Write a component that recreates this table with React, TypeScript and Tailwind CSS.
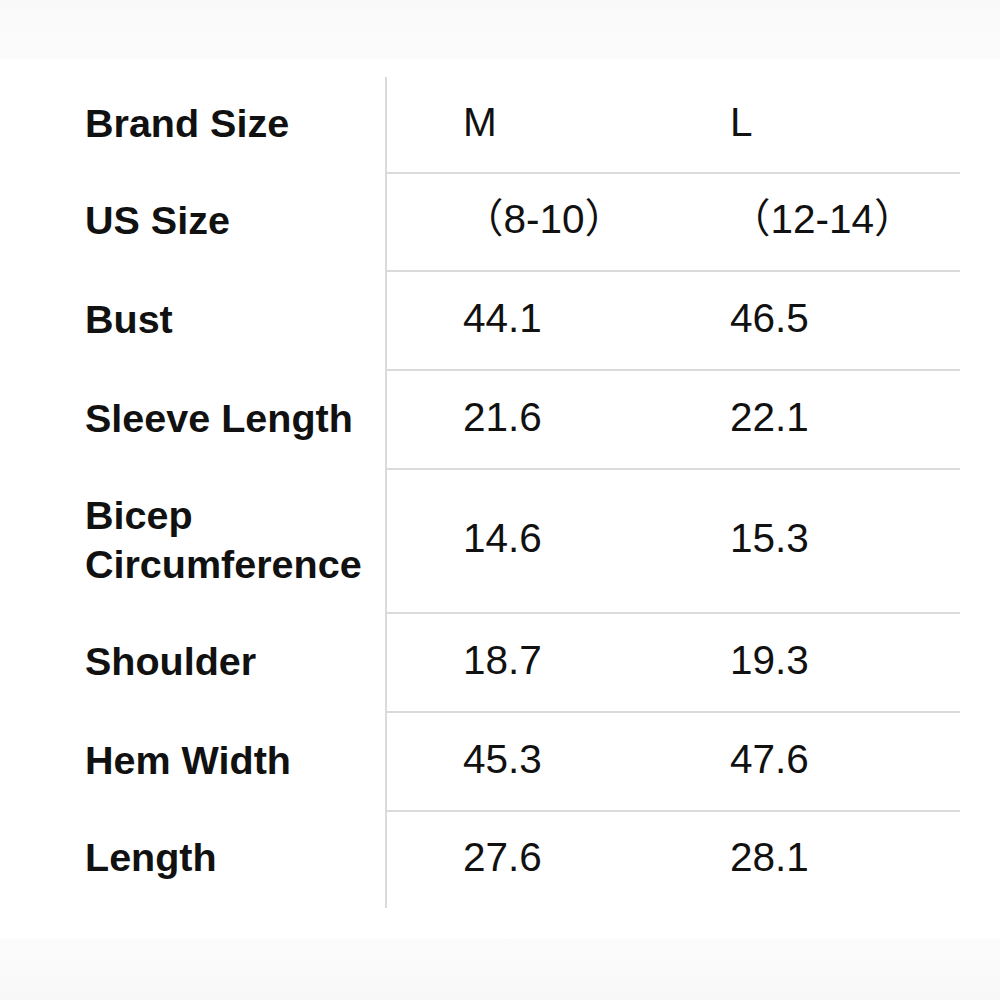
import React from "react";

const rows: { label: string[]; m: string; l: string; h: string }[] = [
  { label: ["Brand Size"], m: "M", l: "L", h: "h-[97px]" },
  { label: ["US Size"], m: "（8-10）", l: "（12-14）", h: "h-[98px]" },
  { label: ["Bust"], m: "44.1", l: "46.5", h: "h-[99px]" },
  { label: ["Sleeve Length"], m: "21.6", l: "22.1", h: "h-[99px]" },
  { label: ["Bicep", "Circumference"], m: "14.6", l: "15.3", h: "h-[144px]" },
  { label: ["Shoulder"], m: "18.7", l: "19.3", h: "h-[99px]" },
  { label: ["Hem Width"], m: "45.3", l: "47.6", h: "h-[99px]" },
  { label: ["Length"], m: "27.6", l: "28.1", h: "h-[96px]" },
];

export default function App() {
  return (
    <div
      className="w-[1000px] h-[1000px] bg-white flex flex-col text-[#111111]"
      style={{ fontFamily: '"Liberation Sans", "Noto Sans CJK SC", Arial, sans-serif' }}
    >
      <div className="h-[59px] bg-gradient-to-b from-[#f9f9f9] to-[#fbfbfb]" />
      <div className="h-[880px] pt-[18px] flex items-start">
        <div className="w-[385px] pl-[85px] flex flex-col">
          {rows.map((r, i) => (
            <div key={i} className={`${r.h} flex flex-col justify-center pb-[5px] text-[39.5px] font-bold leading-[49px]`}>
              {r.label.map((t) => (
                <div key={t}>{t}</div>
              ))}
            </div>
          ))}
        </div>
        <div className="w-[575px] border-l-2 border-[#dadada] flex flex-col">
          {rows.map((r, i) => (
            <div
              key={i}
              className={`${r.h} flex items-center pb-[5px] pl-[76px] text-[40.5px] leading-none ${
                i < rows.length - 1 ? "border-b-2 border-[#dadada]" : ""
              }`}
            >
              <div className="w-[267px]">{r.m}</div>
              <div>{r.l}</div>
            </div>
          ))}
        </div>
      </div>
      <div className="h-[61px] bg-gradient-to-b from-[#fbfbfb] to-[#f8f8f8]" />
    </div>
  );
}
